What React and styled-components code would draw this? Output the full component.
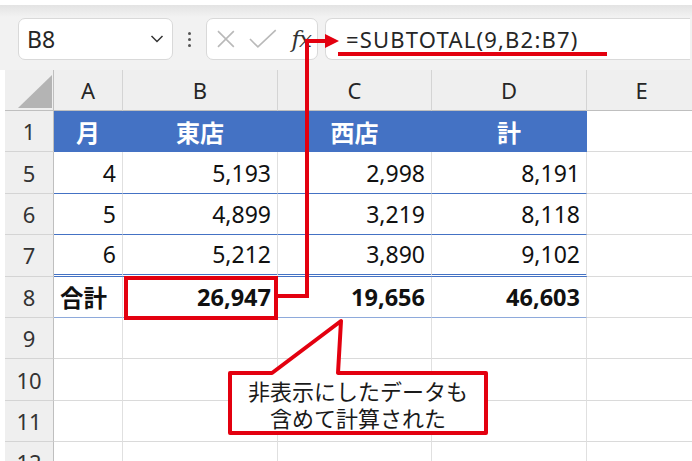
import React from 'react';
import styled, { createGlobalStyle, css } from 'styled-components';

const Global = createGlobalStyle`
  html, body { margin: 0; padding: 0; background: #fff; }
  body { width: 692px; height: 461px; overflow: hidden; font-family: "Noto Sans", "Noto Sans CJK JP", sans-serif; }
  * { box-sizing: border-box; }
`;

const RED = '#e3000f';
const BLUE = '#4472c4';

const Page = styled.div`
  position: relative;
  width: 692px;
  height: 461px;
  overflow: hidden;
  background: #fff;
`;

const Toolbar = styled.div`
  height: 70px;
  display: flex;
  align-items: flex-start;
  padding: 18px 2px 0 18px;
  background: linear-gradient(#fff 0 5px, #e3e3e3 5px, #f2f2f2 17px, #f2f2f2 100%);
`;

const Box = styled.div`
  height: 42px;
  background: #fff;
  border: 1px solid #d9d9d9;
  border-radius: 7px;
  display: flex;
  align-items: center;
`;

const NameBox = styled(Box)`
  width: 155px;
  padding: 0 8px;
  justify-content: space-between;
  font-size: 23px;
  color: #262626;
`;

const Dots = styled.div`
  width: 33px;
  height: 42px;
  display: flex;
  flex-direction: column;
  align-items: center;
  justify-content: center;
  gap: 3px;
  span {
    width: 3px;
    height: 3px;
    border-radius: 50%;
    background: #555;
  }
`;

const FnBox = styled(Box)`
  width: 112px;
  padding: 0 6px 0 9px;
  gap: 13px;
`;

const Fx = styled.span`
  font-family: "DejaVu Serif", "Liberation Serif", serif;
  font-style: italic;
  font-size: 23px;
  color: #333;
  margin-left: 2px;
  letter-spacing: -1px;
`;

const FormulaBox = styled(Box)`
  flex: 1;
  margin-left: 7px;
  padding-left: 20px;
  font-size: 22px;
  letter-spacing: 1.2px;
  color: #262626;
  border-right: none;
  border-radius: 7px 0 0 7px;
`;

const Sheet = styled.div`
  display: grid;
  margin-left: 5px;
  grid-template-columns: 49px 69px 155px 154px 155px 110px;
  grid-template-rows: 41px repeat(9, 41.4px);
  font-size: 22px;
`;

const Corner = styled.div`
  position: relative;
  background: #efefef;
  border-right: 1px solid #bfbfbf;
  border-bottom: 1px solid #bfbfbf;
  &::after {
    content: '';
    position: absolute;
    left: 13px;
    top: 5px;
    width: 34px;
    height: 33px;
    background: #b4b4b4;
    clip-path: polygon(0 100%, 100% 0, 100% 100%);
  }
`;

const ColHead = styled.div`
  background: #efefef;
  border-right: 1px solid #d4d4d4;
  border-bottom: 1px solid #bfbfbf;
  display: flex;
  align-items: center;
  justify-content: center;
  color: #262626;
`;

const RowHead = styled.div`
  background: #efefef;
  border-right: 1px solid #bfbfbf;
  border-bottom: 1px solid #d4d4d4;
  display: flex;
  align-items: center;
  justify-content: center;
  color: #333;
`;

const bottoms = {
  grid: '1px solid #dadada',
  blue: `1px solid ${BLUE}`,
  double: `3px double ${BLUE}`,
  light: '1px solid #8eaadb',
};

const Cell = styled.div`
  display: flex;
  align-items: center;
  padding: 0 6px;
  color: #111;
  white-space: nowrap;
  font-size: 23px;
  border-right: 1px solid ${(p) => (p.$head ? BLUE : '#e0e0e0')};
  border-bottom: ${(p) => bottoms[p.$bottom || 'grid']};
  justify-content: ${(p) => (p.$align === 'right' ? 'flex-end' : p.$align === 'center' ? 'center' : 'flex-start')};
  font-weight: ${(p) => (p.$bold ? 700 : 400)};
  ${(p) =>
    p.$bold &&
    css`
      font-size: 23.5px;
    `}
  ${(p) =>
    p.$head &&
    css`
      background: ${BLUE};
      color: #fff;
      font-weight: 700;
      font-size: 24px;
      border-bottom-color: ${BLUE};
    `}
`;

const Overlay = styled.svg`
  position: absolute;
  left: 0;
  top: 0;
  pointer-events: none;
`;

const CalloutText = styled.div`
  position: absolute;
  left: 230px;
  top: 375px;
  width: 256px;
  height: 58px;
  display: flex;
  flex-direction: column;
  align-items: center;
  justify-content: center;
  font-family: "Noto Sans CJK JP", sans-serif;
  font-size: 22px;
  line-height: 27px;
  color: #1a1a1a;
`;

const cols = ['A', 'B', 'C', 'D', 'E'];
const rows = [
  { n: 5, v: ['4', '5,193', '2,998', '8,191'], bottom: 'blue' },
  { n: 6, v: ['5', '4,899', '3,219', '8,118'], bottom: 'blue' },
  { n: 7, v: ['6', '5,212', '3,890', '9,102'], bottom: 'double' },
  { n: 8, v: ['合計', '26,947', '19,656', '46,603'], bottom: 'light', bold: true },
];

export default function App() {
  return (
    <Page>
      <Global />
      <Toolbar>
        <NameBox>
          <span>B8</span>
          <svg width="14" height="10" viewBox="0 0 14 10">
            <polyline points="1.5,2 7,7.5 12.5,2" fill="none" stroke="#333" strokeWidth="1.5" />
          </svg>
        </NameBox>
        <Dots>
          <span />
          <span />
          <span />
        </Dots>
        <FnBox>
          <svg width="20" height="20" viewBox="0 0 20 20">
            <path d="M2 2 L18 18 M18 2 L2 18" stroke="#b9b9b9" strokeWidth="1.6" />
          </svg>
          <svg width="28" height="20" viewBox="0 0 28 20">
            <polyline points="1,10 9,18 27,1" fill="none" stroke="#b9b9b9" strokeWidth="1.6" />
          </svg>
          <Fx>fx</Fx>
        </FnBox>
        <FormulaBox>=SUBTOTAL(9,B2:B7)</FormulaBox>
      </Toolbar>
      <Sheet>
        <Corner />
        {cols.map((c) => (
          <ColHead key={c}>{c}</ColHead>
        ))}
        <RowHead>1</RowHead>
        <Cell $head $align="center">月</Cell>
        <Cell $head $align="center">東店</Cell>
        <Cell $head $align="center">西店</Cell>
        <Cell $head $align="center">計</Cell>
        <Cell />
        {rows.map((r) => (
          <React.Fragment key={r.n}>
            <RowHead>{r.n}</RowHead>
            {r.v.map((v, i) => (
              <Cell key={i} $align={r.bold && i === 0 ? 'left' : 'right'} $bold={r.bold} $bottom={r.bottom}>
                {v}
              </Cell>
            ))}
            <Cell />
          </React.Fragment>
        ))}
        {[9, 10, 11, 12].map((n) => (
          <React.Fragment key={n}>
            <RowHead>{n}</RowHead>
            <Cell />
            <Cell />
            <Cell />
            <Cell />
            <Cell />
          </React.Fragment>
        ))}
      </Sheet>
      <Overlay width="692" height="461" viewBox="0 0 692 461">
        <line x1="338" y1="54" x2="607" y2="54" stroke={RED} strokeWidth="4" />
        <polyline points="278,296 307,296 307,41 328,41" fill="none" stroke={RED} strokeWidth="4" />
        <polygon points="325,34 339,41 325,48" fill={RED} />
        <rect x="126" y="278" width="150" height="40" fill="none" stroke={RED} strokeWidth="4" />
        <path
          d="M230 373 L272 373 L341 321 L338 373 L486 373 L486 433 L230 433 Z"
          fill="#fff"
          stroke={RED}
          strokeWidth="4"
          strokeLinejoin="round"
        />
      </Overlay>
      <CalloutText>
        <span>非表示にしたデータも</span>
        <span>含めて計算された</span>
      </CalloutText>
    </Page>
  );
}
